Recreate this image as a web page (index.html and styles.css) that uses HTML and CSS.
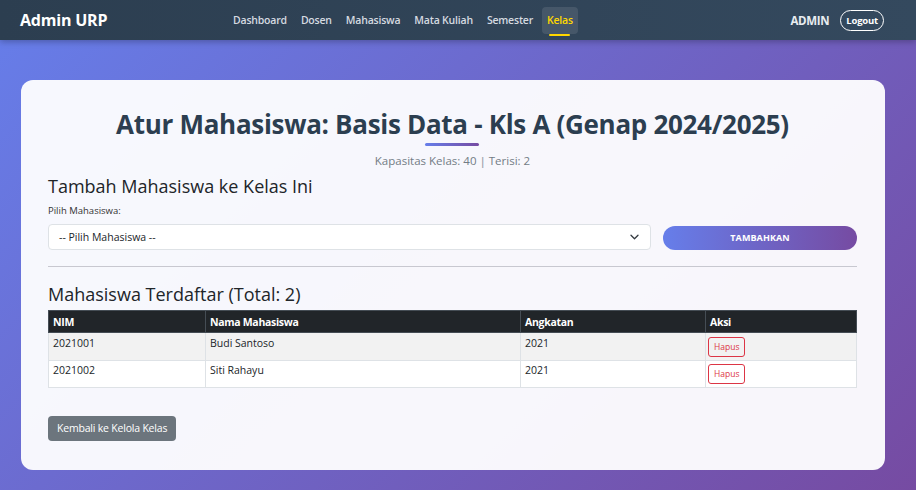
FILE: index.html
```html
<!DOCTYPE html>
<html lang="id">
<head>
<meta charset="utf-8">
<title>Atur Mahasiswa</title>
<link rel="stylesheet" href="styles.css">
</head>
<body>
<nav class="navbar">
  <div class="brand">Admin URP</div>
  <ul class="nav-links">
    <li><a href="#">Dashboard</a></li>
    <li><a href="#">Dosen</a></li>
    <li><a href="#">Mahasiswa</a></li>
    <li><a href="#">Mata Kuliah</a></li>
    <li><a href="#">Semester</a></li>
    <li><a href="#" class="active">Kelas</a></li>
  </ul>
  <div class="user">
    <span class="user-name">ADMIN</span>
    <a href="#" class="logout">Logout</a>
  </div>
</nav>
<main class="page">
  <section class="card">
    <h1 class="title">Atur Mahasiswa: Basis Data - Kls A (Genap 2024/2025)</h1>
    <p class="subtitle">Kapasitas Kelas: 40 <span class="sep">|</span> Terisi: 2</p>

    <h2 class="section-title">Tambah Mahasiswa ke Kelas Ini</h2>
    <form class="add-form">
      <label class="label">Pilih Mahasiswa:</label>
      <div class="form-row">
        <div class="select">
          <span>-- Pilih Mahasiswa --</span>
          <svg class="chev" width="9" height="6" viewBox="0 0 9 6"><path d="M1 1.2l3.5 3.5 3.5-3.5" fill="none" stroke="#343a40" stroke-width="1.3" stroke-linecap="round" stroke-linejoin="round"/></svg>
        </div>
        <button type="button" class="btn-add">TAMBAHKAN</button>
      </div>
    </form>

    <hr class="divider">

    <h2 class="section-title list-title">Mahasiswa Terdaftar (Total: 2)</h2>
    <table class="table">
      <thead>
        <tr><th class="c1">NIM</th><th class="c2">Nama Mahasiswa</th><th class="c3">Angkatan</th><th class="c4">Aksi</th></tr>
      </thead>
      <tbody>
        <tr class="odd"><td>2021001</td><td>Budi Santoso</td><td>2021</td><td><button type="button" class="btn-del">Hapus</button></td></tr>
        <tr><td>2021002</td><td>Siti Rahayu</td><td>2021</td><td><button type="button" class="btn-del">Hapus</button></td></tr>
      </tbody>
    </table>

    <a href="#" class="btn-back">Kembali ke Kelola Kelas</a>
  </section>
</main>
</body>
</html>
```
FILE: styles.css
```css
* { box-sizing: border-box; }
html, body { margin: 0; padding: 0; }
body {
  width: 916px;
  height: 490px;
  overflow: hidden;
  font-family: "Open Sans", "Noto Sans", sans-serif;
  background: linear-gradient(135deg, #667eea 0%, #764ba2 100%);
  color: #212529;
}
.navbar {
  height: 40px;
  background: linear-gradient(90deg, #2c3e50, #34495e);
  box-shadow: 0 2px 6px rgba(0,0,0,0.25);
  display: flex;
  align-items: center;
  padding: 0 32px 0 20px;
}
.brand {
  color: #fff;
  font-weight: 700;
  font-size: 16px;
  width: 208px;
  letter-spacing: -0.2px;
}
.nav-links {
  list-style: none;
  margin: 0;
  padding: 0;
  display: flex;
  align-items: center;
  gap: 4px;
  flex: 1;
}
.nav-links a {
  display: block;
  text-decoration: none;
  color: #d5dae0;
  font-size: 10.5px;
  font-weight: 600;
  padding: 0 5px;
  line-height: 27px;
  border-radius: 4px;
  position: relative;
  letter-spacing: -0.2px;
}
.nav-links a.active {
  color: #ffd700;
  background: rgba(255,255,255,0.1);
}
.nav-links a.active::after {
  content: "";
  position: absolute;
  left: 7px;
  right: 8px;
  bottom: -2px;
  height: 2px;
  background: #ffd700;
  border-radius: 1px;
}
.user {
  display: flex;
  align-items: center;
  gap: 11px;
}
.user-name {
  color: #e8ecf0;
  font-weight: 700;
  font-size: 11.5px;
  letter-spacing: -0.3px;
}
.logout {
  color: #fff;
  text-decoration: none;
  font-size: 9.5px;
  font-weight: 700;
  border: 1px solid #fff;
  border-radius: 11px;
  padding: 0 5px;
  line-height: 19px;
  letter-spacing: -0.2px;
}
.page {
  padding: 40px 31px 0 21px;
}
.card {
  background: rgba(255,255,255,0.95);
  border-radius: 12px;
  padding: 28px 28px 29px 27px;
  height: 390px;
}
.title {
  margin: 0;
  text-align: center;
  font-size: 26px;
  font-weight: 700;
  color: #2c3e50;
  line-height: 32px;
  letter-spacing: -0.3px;
  position: relative;
  padding-bottom: 6px;
}
.title::after {
  content: "";
  position: absolute;
  left: 50%;
  bottom: 0;
  width: 54px;
  margin-left: -28px;
  height: 3px;
  background: linear-gradient(90deg, #667eea, #764ba2);
  border-radius: 2px;
}
.subtitle {
  margin: 7px 0 0;
  text-align: center;
  font-size: 11.5px;
  color: #737c85;
  font-weight: 400;
  line-height: 16px;
}
.sep { color: #9aa2ab; font-weight: 600; }
.section-title {
  margin: 5px 0 0;
  font-size: 18px;
  font-weight: 400;
  color: #212529;
  line-height: 24px;
}
.add-form { margin-top: 6px; }
.label {
  display: block;
  font-size: 9.5px;
  color: #333;
  line-height: 14px;
  margin-bottom: 6px;
}
.form-row {
  display: flex;
  align-items: center;
  gap: 12px;
}
.select {
  flex: 0 0 603px;
  height: 26px;
  background: #fff;
  border: 1px solid #dee2e6;
  border-radius: 4px;
  display: flex;
  align-items: center;
  justify-content: space-between;
  padding: 0 11px 0 10px;
  font-size: 10.5px;
  color: #212529;
}
.btn-add {
  flex: 1;
  height: 24px;
  margin-top: 1px;
  border: none;
  border-radius: 12px;
  background: linear-gradient(90deg, #667eea, #764ba2);
  color: #fff;
  font-family: inherit;
  font-size: 9px;
  font-weight: 700;
  letter-spacing: 0.1px;
}
.divider {
  border: none;
  border-top: 1px solid #c8c8d0;
  margin: 16px 0 0;
}
.list-title { margin-top: 15px; }
.table {
  margin-top: 4px;
  width: 100%;
  border-collapse: collapse;
  font-size: 10.5px;
}
.table th {
  background: #212529;
  color: #fff;
  text-align: left;
  font-weight: 700;
  height: 22px;
  padding: 0 4px;
  border: 1px solid #454d55;
  letter-spacing: -0.3px;
}
.table td {
  height: 28px;
  padding: 0 4px 8px;
  border: 1px solid #dee2e6;
  vertical-align: middle;
  color: #212529;
}
.table td:last-child { padding: 0 2px; }
.table tr.odd td { background: #f2f2f2; }
.table tbody tr:last-child td { height: 27px; background: #fff; }
.c1 { width: 157px; }
.c2 { width: 315px; }
.c3 { width: 185px; }
.btn-del {
  font-family: inherit;
  font-size: 8.5px;
  color: #dc3545;
  background: transparent;
  border: 1px solid #dc3545;
  border-radius: 3px;
  padding: 0 5px;
  height: 20px;
  line-height: 18px;
}
.btn-back {
  display: inline-block;
  margin-top: 28px;
  background: #6c757d;
  color: #fff;
  text-decoration: none;
  font-size: 10.5px;
  border-radius: 4px;
  padding: 0 9px;
  line-height: 25px;
  letter-spacing: -0.2px;
}
```
